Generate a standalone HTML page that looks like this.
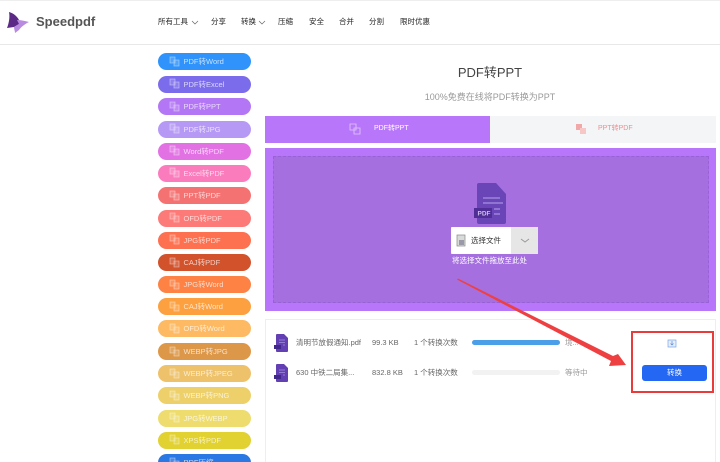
<!DOCTYPE html>
<html><head><meta charset="utf-8"><style>
*{margin:0;padding:0;box-sizing:border-box}
html,body{width:720px;height:462px;overflow:hidden;background:#fff;font-family:"Liberation Sans","Noto Sans CJK SC",sans-serif}
#w{position:absolute;left:0;top:0;width:720px;height:462px;filter:blur(.35px);overflow:hidden}
.a{position:absolute;white-space:nowrap}
.nav{top:17px;font-size:7.5px;line-height:10px;color:#222}
.p{position:absolute;left:158px;width:93px;height:17px;border-radius:9px;color:#fff;font-size:7.5px;line-height:17px;padding-left:25.5px;white-space:nowrap}
.p svg{position:absolute;left:11px;top:2.5px;width:11px;height:11px}
.p span{opacity:.72}
.g{color:#666;font-size:7.5px;line-height:10px}
</style></head><body><div id="w">
<svg width="0" height="0" style="position:absolute"><defs><symbol id="i" viewBox="0 0 11 11"><path d="M1 1H6V7H1ZM5 4H10V10H5Z" fill="#fff" fill-opacity=".15" stroke="#fff" stroke-opacity=".45" stroke-width=".8"/></symbol></defs></svg>
<div class="a" style="left:0;top:0;width:720px;height:1px;background:#eee"></div>
<div class="a" style="left:0;top:44px;width:720px;height:1px;background:#e8e8e8"></div>
<svg class="a" style="left:6px;top:11px" width="24" height="23" viewBox="0 0 24 23"><path d="M3 1C7 2 11 5 13 9L13 13L8 16L1 17C3 12 4 6 3 1Z" fill="#5b2a86"/><path d="M11 9C15 9 19 10 23 11C19 13 15 16 13 19L9 22C9 20 8 18 8 16L13 13Z" fill="#b88ae0"/></svg>
<div class="a" style="left:36px;top:14px;font-size:13px;line-height:16px;font-weight:bold;color:#555">Speedpdf</div>
<div class="a nav" style="left:158px">所有工具</div>
<svg class="a" style="left:191px;top:20px" width="8" height="5"><path d="M1 1L4 4L7 1" fill="none" stroke="#666" stroke-width=".7"/></svg>
<div class="a nav" style="left:211px">分享</div>
<div class="a nav" style="left:241px">转换</div>
<svg class="a" style="left:258px;top:20px" width="8" height="5"><path d="M1 1L4 4L7 1" fill="none" stroke="#666" stroke-width=".7"/></svg>
<div class="a nav" style="left:278px">压缩</div>
<div class="a nav" style="left:309px">安全</div>
<div class="a nav" style="left:339px">合并</div>
<div class="a nav" style="left:369px">分割</div>
<div class="a nav" style="left:400px">限时优惠</div>

<div class="p" style="top:53px;background:#2f93fb"><svg><use href="#i"/></svg><span>PDF转Word</span></div>
<div class="p" style="top:75.5px;background:#7b6cec"><svg><use href="#i"/></svg><span>PDF转Excel</span></div>
<div class="p" style="top:98px;background:#b376f5"><svg><use href="#i"/></svg><span>PDF转PPT</span></div>
<div class="p" style="top:120.5px;background:#b699f5"><svg><use href="#i"/></svg><span>PDF转JPG</span></div>
<div class="p" style="top:142.5px;background:#e272e4"><svg><use href="#i"/></svg><span>Word转PDF</span></div>
<div class="p" style="top:164.5px;background:#fb7cbd"><svg><use href="#i"/></svg><span>Excel转PDF</span></div>
<div class="p" style="top:187px;background:#f47272"><svg><use href="#i"/></svg><span>PPT转PDF</span></div>
<div class="p" style="top:209.5px;background:#fc7a78"><svg><use href="#i"/></svg><span>OFD转PDF</span></div>
<div class="p" style="top:231.5px;background:#fd7050"><svg><use href="#i"/></svg><span>JPG转PDF</span></div>
<div class="p" style="top:254px;background:#d2522c"><svg><use href="#i"/></svg><span>CAJ转PDF</span></div>
<div class="p" style="top:276px;background:#fd8243"><svg><use href="#i"/></svg><span>JPG转Word</span></div>
<div class="p" style="top:298px;background:#fda03f"><svg><use href="#i"/></svg><span>CAJ转Word</span></div>
<div class="p" style="top:320px;background:#fdba62"><svg><use href="#i"/></svg><span>OFD转Word</span></div>
<div class="p" style="top:343px;background:#dd9748"><svg><use href="#i"/></svg><span>WEBP转JPG</span></div>
<div class="p" style="top:365px;background:#eec16b"><svg><use href="#i"/></svg><span>WEBP转JPEG</span></div>
<div class="p" style="top:387px;background:#edd06a"><svg><use href="#i"/></svg><span>WEBP转PNG</span></div>
<div class="p" style="top:409.5px;background:#eedd6e"><svg><use href="#i"/></svg><span>JPG转WEBP</span></div>
<div class="p" style="top:431.5px;background:#e1d131"><svg><use href="#i"/></svg><span>XPS转PDF</span></div>
<div class="p" style="top:454px;background:#2a78e4"><svg><use href="#i"/></svg><span>PDF压缩</span></div>

<div class="a" style="left:265px;width:455px;top:65px;text-align:center;font-size:13px;line-height:16px;color:#444;padding-right:5px">PDF转PPT</div>
<div class="a" style="left:265px;width:455px;top:91px;text-align:center;font-size:9px;line-height:12px;color:#999;padding-right:5px">100%免费在线将PDF转换为PPT</div>
<div class="a" style="left:265px;top:116px;width:225px;height:27px;background:#b877fa"></div>
<div class="a" style="left:490px;top:116px;width:226px;height:27px;background:#f4f5f7"></div>
<svg class="a" style="left:349px;top:123px" width="12" height="12"><path d="M1 1H7V7H1ZM5 5H11V11H5Z" fill="none" stroke="#fff" stroke-opacity=".6" stroke-width=".8"/></svg>
<div class="a" style="left:374px;top:124px;font-size:7px;line-height:10px;color:#fff">PDF转PPT</div>
<svg class="a" style="left:575px;top:123px" width="12" height="12"><path d="M1 1H7V7H1Z" fill="#f0a8a8"/><path d="M5 5H11V11H5Z" fill="#f7c6c6"/></svg>
<div class="a" style="left:598px;top:124px;font-size:7px;line-height:10px;color:#ec8f8f">PPT转PDF</div>

<div class="a" style="left:265px;top:148px;width:451px;height:163px;background:#b877fa"></div>
<div class="a" style="left:273px;top:156px;width:436px;height:147px;background:#a56fe0;border:1px dashed #9a60d8"></div>
<svg class="a" style="left:474px;top:183px" width="33" height="41" viewBox="0 0 33 41"><path d="M3 2Q3 0 5 0H22L32 11V39Q32 41 30 41H5Q3 41 3 39Z" fill="#6a45b8"/><path d="M0 25H18V35H0Z" fill="#4f2f96"/><path d="M9 15H26M9 20H29M20 26H26M20 31H26" stroke="#a890e0" stroke-width="1.3"/><text x="3.5" y="32.5" font-size="6.5" font-weight="bold" fill="#cdbfee" font-family="Liberation Sans">PDF</text></svg>
<div class="a" style="left:451px;top:227px;width:87px;height:27px;background:#fff;border-radius:1px"></div>
<div class="a" style="left:511px;top:227px;width:27px;height:27px;background:#e6e6e6"></div>
<svg class="a" style="left:520px;top:238px" width="10" height="6"><path d="M1 1L5 4L9 1" fill="none" stroke="#999" stroke-width="1"/></svg>
<svg class="a" style="left:456px;top:234px" width="10" height="13"><rect x="1" y="1" width="8" height="11" fill="#d8dcd8" stroke="#888" stroke-width=".7"/><rect x="3" y="6" width="5" height="5" fill="#99a"/></svg>
<div class="a" style="left:471px;top:235px;font-size:7.5px;line-height:11px;color:#333">选择文件</div>
<div class="a" style="left:452px;top:255px;font-size:7.5px;line-height:11px;color:#fff">将选择文件拖放至此处</div>

<div class="a" style="left:265px;top:319px;width:451px;height:143px;border:1px solid #eee;border-bottom:none"></div>
<svg class="a" style="left:274px;top:334px" width="14" height="18" viewBox="0 0 14 18"><path d="M2 1Q2 0 3 0H10L14 4V17Q14 18 13 18H3Q2 18 2 17Z" fill="#6240b4"/><path d="M0 11H7V15H0Z" fill="#40278a"/><path d="M5 6H11M5 8.5H11M9 11H11" stroke="#a48fdc" stroke-width=".7"/></svg>
<svg class="a" style="left:274px;top:364px" width="14" height="18" viewBox="0 0 14 18"><path d="M2 1Q2 0 3 0H10L14 4V17Q14 18 13 18H3Q2 18 2 17Z" fill="#6240b4"/><path d="M0 11H7V15H0Z" fill="#40278a"/><path d="M5 6H11M5 8.5H11M9 11H11" stroke="#a48fdc" stroke-width=".7"/></svg>
<div class="a g" style="left:296px;top:338px">清明节放假通知.pdf</div>
<div class="a g" style="left:372px;top:338px">99.3 KB</div>
<div class="a g" style="left:414px;top:338px">1 个转换次数</div>
<div class="a g" style="left:296px;top:368px">630 中铁二局集...</div>
<div class="a g" style="left:372px;top:368px">832.8 KB</div>
<div class="a g" style="left:414px;top:368px">1 个转换次数</div>
<div class="a" style="left:472px;top:340px;width:88px;height:5px;border-radius:3px;background:#4a9fe8"></div>
<div class="a" style="left:472px;top:370px;width:88px;height:5px;border-radius:3px;background:#f2f2f2"></div>
<div class="a" style="left:565px;top:338px;font-size:7.5px;line-height:10px;color:#999">境...</div>
<div class="a" style="left:565px;top:368px;font-size:7.5px;line-height:10px;color:#999">等待中</div>
<svg class="a" style="left:666px;top:339px" width="12" height="10"><path d="M2 1H10V8H2Z" fill="#e6eefb" stroke="#7ea6e6" stroke-width=".7"/><path d="M6 2V6M4.5 4.5L6 6L7.5 4.5" fill="none" stroke="#5b8cdc" stroke-width=".7"/></svg>
<div class="a" style="left:642px;top:365px;width:65px;height:16px;border-radius:3px;background:#2467f2;color:#fff;font-size:7.5px;line-height:16px;text-align:center">转换</div>

<svg class="a" style="left:0;top:0" width="720" height="462"><rect x="632" y="332" width="81" height="60" fill="none" stroke="#ea3b3b" stroke-width="2"/><path d="M457 279.5L458 278.5L613 356L618 354L626 365L609 366L611 361Z" fill="#ee4040"/></svg>
</div></body></html>
